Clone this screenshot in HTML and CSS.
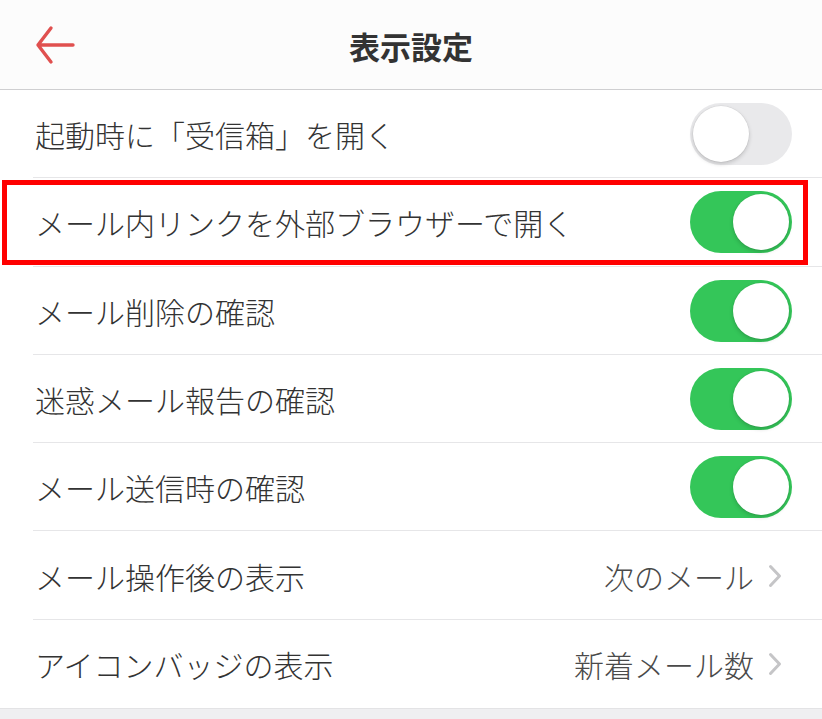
FILE: index.html
```html
<!DOCTYPE html>
<html lang="ja">
<head>
<meta charset="utf-8">
<link rel="stylesheet" href="styles.css">
</head>
<body>
<div class="screen">
  <header class="nav">
    <span class="back">
      <svg width="44" height="40" viewBox="0 0 44 40"><path d="M18 3 L5 20 L18 37 M5 20 L40 20" fill="none" stroke="#e0504f" stroke-width="3.4" stroke-linecap="round" stroke-linejoin="round"/></svg>
    </span>
    <h1 class="title">表示設定</h1>
  </header>
  <ul class="list">
    <li class="row"><span class="label">起動時に「受信箱」を開く</span><span class="toggle"></span></li>
    <li class="row marked"><span class="label">メール内リンクを外部ブラウザーで開く</span><span class="toggle on"></span></li>
    <li class="row"><span class="label">メール削除の確認</span><span class="toggle on"></span></li>
    <li class="row"><span class="label">迷惑メール報告の確認</span><span class="toggle on"></span></li>
    <li class="row"><span class="label">メール送信時の確認</span><span class="toggle on"></span></li>
    <li class="row"><span class="label">メール操作後の表示</span><span class="value">次のメール<span class="chev"><svg width="14" height="24" viewBox="0 0 14 24"><path d="M2.5 2.5 L11.5 12 L2.5 21.5" fill="none" stroke="#c5c5c7" stroke-width="3" stroke-linecap="round" stroke-linejoin="round"/></svg></span></span></li>
    <li class="row last"><span class="label">アイコンバッジの表示</span><span class="value">新着メール数<span class="chev"><svg width="14" height="24" viewBox="0 0 14 24"><path d="M2.5 2.5 L11.5 12 L2.5 21.5" fill="none" stroke="#c5c5c7" stroke-width="3" stroke-linecap="round" stroke-linejoin="round"/></svg></span></span></li>
  </ul>
  <div class="footer"></div>
</div>
</body>
</html>
```
FILE: styles.css
```css
* { box-sizing: border-box; margin: 0; padding: 0; }
html, body { width: 822px; height: 719px; overflow: hidden; background: #fff; }
body { font-family: "Noto Sans CJK JP", "Noto Sans", sans-serif; color: #3a3a3a; }
.screen { display: flex; flex-direction: column; height: 719px; }
.nav {
  height: 90px;
  background: #fcfcfc;
  border-bottom: 1px solid #cfcfd1;
  display: flex;
  align-items: center;
  justify-content: center;
  position: relative;
}
.back { position: absolute; left: 33px; top: 25px; display: flex; }
.title { font-size: 31px; font-weight: 700; color: #333; letter-spacing: 0; line-height: 1; margin-top: 2px; }
.list { list-style: none; }
.row {
  height: 88.3px;
  display: flex;
  align-items: center;
  justify-content: space-between;
  padding: 0 30px 0 35px;
  position: relative;
}
.row::before {
  content: "";
  position: absolute;
  left: 33px; right: 0; bottom: 0;
  height: 1px;
  background: #e6e6e8;
}
.row.last::before { display: none; }
.label { font-size: 30px; font-weight: 300; line-height: 1; color: #333; }
.toggle {
  width: 102px;
  height: 62px;
  border-radius: 31px;
  background: #e9e9eb;
  position: relative;
  flex: none;
}
.toggle::after {
  content: "";
  position: absolute;
  top: 3px; left: 3px;
  width: 56px; height: 56px;
  border-radius: 50%;
  background: #fff;
  box-shadow: 0 2px 4px rgba(0,0,0,0.18), 0 0 0 0.5px rgba(0,0,0,0.06);
}
.toggle.on { background: #34c659; }
.toggle.on::after { left: 43px; }
.value { display: flex; align-items: center; font-size: 30px; font-weight: 300; line-height: 1; color: #4a4a4a; margin-right: 10px; }
.chev { display: flex; margin-left: 14px; }
.marked::after {
  content: "";
  position: absolute;
  left: 2px; right: 14px; top: 2px; bottom: 2px;
  border: 5px solid #ff0000;
}
.footer { flex: 1; background: #efeff1; border-top: 1px solid #e3e3e5; }
```
